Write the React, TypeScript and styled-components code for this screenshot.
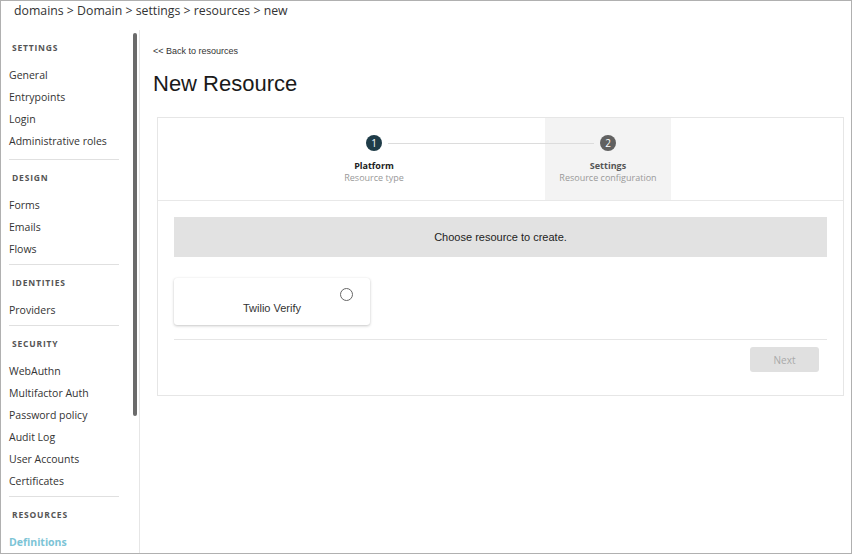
import React from "react";
import styled, { createGlobalStyle } from "styled-components";

const GlobalStyle = createGlobalStyle`
  html, body { margin: 0; padding: 0; background: #fff; }
  body { font-family: "Open Sans", "Noto Sans", sans-serif; color: #333; }
  * { box-sizing: border-box; }
`;

const Frame = styled.div`
  width: 852px;
  height: 554px;
  border: 1px solid #b0b0b0;
  display: flex;
  flex-direction: column;
  overflow: hidden;
  background: #fff;
`;

const Breadcrumb = styled.div`
  height: 29px;
  flex: none;
  padding-left: 13px;
  font-family: "Open Sans", sans-serif;
  font-size: 12.3px;
  line-height: 20px;
  color: #333;
`;

const Body = styled.div`
  flex: 1;
  display: flex;
  min-height: 0;
`;

const Sidebar = styled.nav`
  width: 139px;
  flex: none;
  border-right: 1px solid #e6e6e6;
  position: relative;
  overflow: hidden;
  padding-left: 8px;
`;

const ScrollThumb = styled.div`
  position: absolute;
  left: 132px;
  top: 3px;
  width: 4px;
  height: 383px;
  border-radius: 2px;
  background: #6b6b6b;
`;

const SectionHeader = styled.div`
  padding: 11px 0 9px 3px;
  line-height: 14px;
  font-size: 8.5px;
  font-weight: 700;
  letter-spacing: 0.8px;
  text-transform: uppercase;
  color: #555;
`;

const NavItem = styled.div<{ $active?: boolean }>`
  height: 22px;
  line-height: 22px;
  font-size: 10.5px;
  white-space: nowrap;
  color: ${(p) => (p.$active ? "#7cc4d6" : "#333")};
  font-weight: ${(p) => (p.$active ? 700 : 400)};
`;

const NavDivider = styled.div<{ $gap: number }>`
  width: 110px;
  height: 1px;
  background: #e0e0e0;
  margin-top: ${(p) => p.$gap}px;
`;

const Main = styled.main`
  flex: 1;
  min-width: 0;
  padding: 15px 7px 0 13px;
`;

const BackLink = styled.a`
  display: block;
  font-family: "Liberation Sans", Arial, sans-serif;
  font-size: 9px;
  line-height: 12px;
  color: #333;
  text-decoration: none;
`;

const Title = styled.h1`
  margin: 14px 0 0;
  font-family: "Liberation Sans", Arial, sans-serif;
  font-weight: 400;
  font-size: 22px;
  line-height: 26px;
  color: #1a1a1a;
`;

const Card = styled.section`
  margin: 20px 0 0 4px;
  border: 1px solid #e6e6e6;
  background: #fff;
`;

const StepHeader = styled.div`
  height: 83px;
  border-bottom: 1px solid #e8e8e8;
  padding-left: 153px;
`;

const Steps = styled.div`
  position: relative;
  display: flex;
  height: 82px;
`;

const Connector = styled.div`
  position: absolute;
  left: 77px;
  width: 206px;
  top: 25px;
  height: 1px;
  background: #dcdcdc;
  z-index: 1;
`;

const Step = styled.div<{ $highlight?: boolean }>`
  width: 126px;
  height: 82px;
  display: flex;
  flex-direction: column;
  align-items: center;
  background: ${(p) => (p.$highlight ? "#f3f3f3" : "transparent")};
`;

const StepGap = styled.div`
  width: 108px;
`;

const StepCircle = styled.div<{ $color: string }>`
  position: relative;
  z-index: 2;
  margin-top: 17px;
  width: 16px;
  height: 16px;
  border-radius: 50%;
  background: ${(p) => p.$color};
  color: #fff;
  font-size: 10px;
  line-height: 16px;
  text-align: center;
`;

const StepLabel = styled.div<{ $color: string }>`
  margin-top: 9px;
  font-size: 9px;
  line-height: 12px;
  font-weight: 700;
  color: ${(p) => p.$color};
`;

const StepSub = styled.div`
  font-size: 9px;
  line-height: 12px;
  color: #999;
  white-space: nowrap;
`;

const Content = styled.div`
  padding: 16px 16px 16px;
`;

const Banner = styled.div`
  height: 40px;
  background: #e2e2e2;
  display: flex;
  align-items: center;
  justify-content: center;
  font-family: "Liberation Sans", Arial, sans-serif;
  font-size: 11px;
  color: #222;
`;

const Options = styled.div`
  margin-top: 21px;
  display: flex;
  gap: 16px;
`;

const OptionCard = styled.div`
  position: relative;
  width: 196px;
  height: 47px;
  border-radius: 3px;
  background: #fff;
  box-shadow: 0 1px 3px rgba(0, 0, 0, 0.22), 0 0 1px rgba(0, 0, 0, 0.08);
  padding-top: 24px;
  text-align: center;
  font-family: "Liberation Sans", Arial, sans-serif;
  font-size: 11px;
  line-height: 12px;
  color: #333;
`;

const Radio = styled.span`
  position: absolute;
  top: 10px;
  right: 17px;
  width: 13px;
  height: 13px;
  border-radius: 50%;
  border: 1.5px solid #666;
`;

const Rule = styled.div`
  margin-top: 14px;
  height: 1px;
  background: #e6e6e6;
`;

const Footer = styled.div`
  display: flex;
  justify-content: flex-end;
  padding: 7px 8px 7px 0;
`;

const NextButton = styled.button`
  width: 69px;
  height: 25px;
  border: none;
  border-radius: 3px;
  background: #e0e0e0;
  color: #a9a9a9;
  font-family: "Open Sans", sans-serif;
  font-size: 10px;
  padding: 0;
`;

type Section = { title: string; items: string[]; gap: number; active?: string };

const sections: Section[] = [
  { title: "Settings", items: ["General", "Entrypoints", "Login", "Administrative roles"], gap: 7 },
  { title: "Design", items: ["Forms", "Emails", "Flows"], gap: 4 },
  { title: "Identities", items: ["Providers"], gap: 4 },
  {
    title: "Security",
    items: ["WebAuthn", "Multifactor Auth", "Password policy", "Audit Log", "User Accounts", "Certificates"],
    gap: 4,
  },
  { title: "Resources", items: ["Definitions"], gap: 0, active: "Definitions" },
];

export default function App() {
  return (
    <>
      <GlobalStyle />
      <Frame>
        <Breadcrumb>domains &gt; Domain &gt; settings &gt; resources &gt; new</Breadcrumb>
        <Body>
          <Sidebar>
            <ScrollThumb />
            {sections.map((s, i) => (
              <React.Fragment key={s.title}>
                <SectionHeader>{s.title}</SectionHeader>
                {s.items.map((it) => (
                  <NavItem key={it} $active={it === s.active}>
                    {it}
                  </NavItem>
                ))}
                {i < sections.length - 1 && <NavDivider $gap={s.gap} />}
              </React.Fragment>
            ))}
          </Sidebar>
          <Main>
            <BackLink href="#">&lt;&lt; Back to resources</BackLink>
            <Title>New Resource</Title>
            <Card>
              <StepHeader>
                <Steps>
                  <Connector />
                  <Step>
                    <StepCircle $color="#1f3c48">1</StepCircle>
                    <StepLabel $color="#222">Platform</StepLabel>
                    <StepSub>Resource type</StepSub>
                  </Step>
                  <StepGap />
                  <Step $highlight>
                    <StepCircle $color="#616161">2</StepCircle>
                    <StepLabel $color="#555">Settings</StepLabel>
                    <StepSub>Resource configuration</StepSub>
                  </Step>
                </Steps>
              </StepHeader>
              <Content>
                <Banner>Choose resource to create.</Banner>
                <Options>
                  <OptionCard>
                    <Radio />
                    Twilio Verify
                  </OptionCard>
                </Options>
                <Rule />
                <Footer>
                  <NextButton disabled>Next</NextButton>
                </Footer>
              </Content>
            </Card>
          </Main>
        </Body>
      </Frame>
    </>
  );
}
